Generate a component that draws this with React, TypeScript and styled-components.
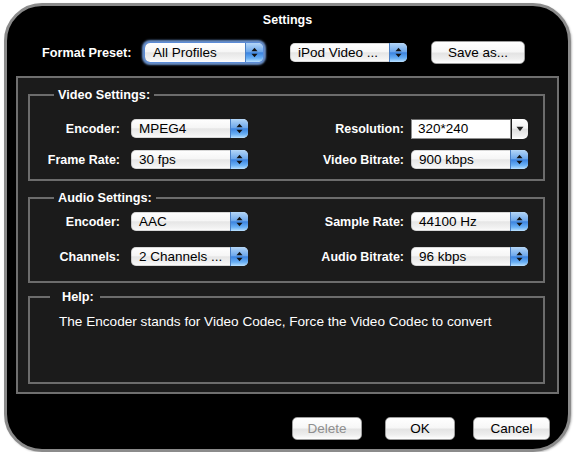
import React from 'react'
import styled, { createGlobalStyle } from 'styled-components'

const GlobalStyle = createGlobalStyle`
  html, body {
    margin: 0;
    padding: 0;
    background: #ffffff;
  }
  body {
    font-family: "Lucida Grande", "Liberation Sans", Arial, sans-serif;
  }
`

type Side = 'left' | 'right'

interface FieldProps {
  label: string
  value: string
  side: Side
  combo?: boolean
}

const videoFields: FieldProps[] = [
  { label: 'Encoder:', value: 'MPEG4', side: 'left' },
  { label: 'Resolution:', value: '320*240', side: 'right', combo: true },
  { label: 'Frame Rate:', value: '30 fps', side: 'left' },
  { label: 'Video Bitrate:', value: '900 kbps', side: 'right' },
]

const audioFields: FieldProps[] = [
  { label: 'Encoder:', value: 'AAC', side: 'left' },
  { label: 'Sample Rate:', value: '44100 Hz', side: 'right' },
  { label: 'Channels:', value: '2 Channels ...', side: 'left' },
  { label: 'Audio Bitrate:', value: '96 kbps', side: 'right' },
]

const UpDownArrows = () => (
  <svg width="7" height="11" viewBox="0 0 7 11">
    <polygon points="0.5,4.2 3.5,0.8 6.5,4.2" fill="#111" />
    <polygon points="0.5,6.8 3.5,10.2 6.5,6.8" fill="#111" />
  </svg>
)

const DownArrow = () => (
  <svg width="8" height="6" viewBox="0 0 8 6">
    <polygon points="0.5,0.8 7.5,0.8 4,5.2" fill="#222" />
  </svg>
)

const PopUpButton = ({ value, focused }: { value: string; focused?: boolean }) => (
  <PopUp $focused={focused}>
    <PopUpText>{value}</PopUpText>
    <PopUpArrows>
      <UpDownArrows />
    </PopUpArrows>
  </PopUp>
)

const ComboBox = ({ value }: { value: string }) => (
  <Combo>
    <ComboField>{value}</ComboField>
    <ComboButton>
      <DownArrow />
    </ComboButton>
  </Combo>
)

const FieldGrid = ({ fields, gap }: { fields: FieldProps[]; gap: number }) => (
  <Grid $gap={gap}>
    {fields.map(f => (
      <React.Fragment key={f.label + f.side}>
        <Label $side={f.side}>{f.label}</Label>
        {f.combo ? <ComboBox value={f.value} /> : <PopUpButton value={f.value} />}
      </React.Fragment>
    ))}
  </Grid>
)

const App = () => {
  return (
    <>
      <GlobalStyle />
      <Window>
        <Title>Settings</Title>
        <PresetRow>
          <PresetLabel>Format Preset:</PresetLabel>
          <PopUpSlot $width={118}>
            <PopUpButton value="All Profiles" focused />
          </PopUpSlot>
          <PopUpSlot $width={117} $left={27}>
            <PopUpButton value="iPod Video ..." />
          </PopUpSlot>
          <PushButton $width={94} $left={24}>
            Save as...
          </PushButton>
        </PresetRow>
        <Panel>
          <Group $pt={17} $pb={10}>
            <Legend>Video Settings:</Legend>
            <FieldGrid fields={videoFields} gap={12} />
          </Group>
          <Group $pt={7} $pb={15} $mt={10}>
            <Legend>Audio Settings:</Legend>
            <FieldGrid fields={audioFields} gap={16} />
          </Group>
          <Group $pt={10} $pb={0} $mt={7} $height={94}>
            <Legend $help>Help:</Legend>
            <HelpText>
              The Encoder stands for Video Codec, Force the Video Codec to convert
            </HelpText>
          </Group>
        </Panel>
        <ButtonRow>
          <PushButton $width={70} disabled>
            Delete
          </PushButton>
          <PushButton $width={70} $left={23}>
            OK
          </PushButton>
          <PushButton $width={77} $left={18}>
            Cancel
          </PushButton>
        </ButtonRow>
      </Window>
    </>
  )
}

const Window = styled.div`
  box-sizing: border-box;
  width: 567px;
  height: 449px;
  margin: 3px 0 0 4px;
  border: 3px solid #8b8b8b;
  border-radius: 38px;
  background: #000000;
  display: flex;
  flex-direction: column;
  box-shadow: 1px 1px 2px rgba(0, 0, 0, 0.25);
`

const Title = styled.div`
  margin-top: 6px;
  height: 16px;
  line-height: 16px;
  text-align: center;
  color: #ffffff;
  font-weight: bold;
  font-size: 12.5px;
`

const PresetRow = styled.div`
  display: flex;
  align-items: center;
  height: 23px;
  margin-top: 13px;
  padding-left: 35px;
`

const PresetLabel = styled.div`
  width: 103px;
  color: #ffffff;
  font-weight: bold;
  font-size: 12.7px;
`

const PopUpSlot = styled.div<{ $width: number; $left?: number }>`
  width: ${p => p.$width}px;
  margin-left: ${p => p.$left || 0}px;
`

const PopUp = styled.div<{ $focused?: boolean }>`
  display: flex;
  align-items: stretch;
  height: 19px;
  border-radius: 5px;
  overflow: hidden;
  background: linear-gradient(#ffffff 0%, #f6f6f6 45%, #e6e6e6 52%, #f3f3f3 85%, #ffffff 100%);
  box-shadow: ${p =>
    p.$focused
      ? '0 0 0 1px #5b8bd6, 0 0 2px 3px rgba(126, 170, 236, 0.85)'
      : 'inset 0 0 0 1px rgba(0, 0, 0, 0.15)'};
`

const PopUpText = styled.div`
  flex: 1;
  padding-left: 8px;
  line-height: 19px;
  font-size: 13.5px;
  color: #000000;
  white-space: nowrap;
  overflow: hidden;
`

const PopUpArrows = styled.div`
  width: 17px;
  display: flex;
  align-items: center;
  justify-content: center;
  border-left: 1px solid #4a7fc4;
  background: linear-gradient(#b4d6f7 0%, #6fa9ec 45%, #3c84e0 52%, #69b0f5 80%, #b9e0ff 100%);
`

const Combo = styled.div`
  display: flex;
  height: 20px;
`

const ComboField = styled.div`
  flex: 1;
  box-sizing: border-box;
  background: #ffffff;
  border: 1px solid #8f8f8f;
  border-top-color: #6e6e6e;
  padding-left: 6px;
  line-height: 18px;
  font-size: 13.5px;
  color: #000000;
`

const ComboButton = styled.div`
  width: 16px;
  margin-left: 1px;
  display: flex;
  align-items: center;
  justify-content: center;
  border-radius: 0 5px 5px 0;
  background: linear-gradient(#ffffff 0%, #f2f2f2 45%, #dedede 52%, #efefef 85%, #ffffff 100%);
`

const PushButton = styled.button<{ $width: number; $left?: number }>`
  box-sizing: border-box;
  width: ${p => p.$width}px;
  height: 23px;
  margin: 0 0 0 ${p => p.$left || 0}px;
  padding: 0;
  border: 1px solid #9d9d9d;
  border-radius: 5px;
  background: linear-gradient(#ffffff 0%, #f7f7f7 45%, #e4e4e4 55%, #eeeeee 80%, #ffffff 100%);
  font-family: inherit;
  font-size: 13.5px;
  color: #000000;
  &:disabled {
    color: #8e8e8e;
  }
`

const Panel = styled.div`
  box-sizing: border-box;
  height: 318px;
  margin: 12px 9px 0 9px;
  padding: 10px 12px 0 10px;
  border: 2px solid #6f6f6f;
  background: #1b1b1b;
  display: flex;
  flex-direction: column;
`

const Group = styled.fieldset<{ $pt: number; $pb: number; $mt?: number; $height?: number }>`
  box-sizing: border-box;
  margin: ${p => p.$mt || 0}px 0 0 0;
  padding: ${p => p.$pt}px 0 ${p => p.$pb}px 0;
  min-width: 0;
  border: 2px solid #6c6c6c;
  ${p => (p.$height ? `height: ${p.$height}px;` : '')}
`

const Legend = styled.legend<{ $help?: boolean }>`
  margin-left: ${p => (p.$help ? 20 : 24)}px;
  padding: ${p => (p.$help ? '0 6px 0 12px' : '0 4px')};
  line-height: 14px;
  color: #ffffff;
  font-weight: bold;
  font-size: 12.7px;
`

const Grid = styled.div<{ $gap: number }>`
  display: grid;
  grid-template-columns: 101px 117px 163px 117px;
  grid-auto-rows: 19px;
  row-gap: ${p => p.$gap}px;
  align-items: center;
`

const Label = styled.div<{ $side: Side }>`
  text-align: right;
  padding-right: ${p => (p.$side === 'left' ? 11 : 7)}px;
  color: #ffffff;
  font-weight: bold;
  font-size: 12.5px;
  white-space: nowrap;
`

const HelpText = styled.div`
  padding-left: 29px;
  line-height: 16px;
  color: #ffffff;
  font-size: 13.6px;
`

const ButtonRow = styled.div`
  display: flex;
  justify-content: flex-end;
  margin-top: 23px;
  padding-right: 18px;
`

export default App
